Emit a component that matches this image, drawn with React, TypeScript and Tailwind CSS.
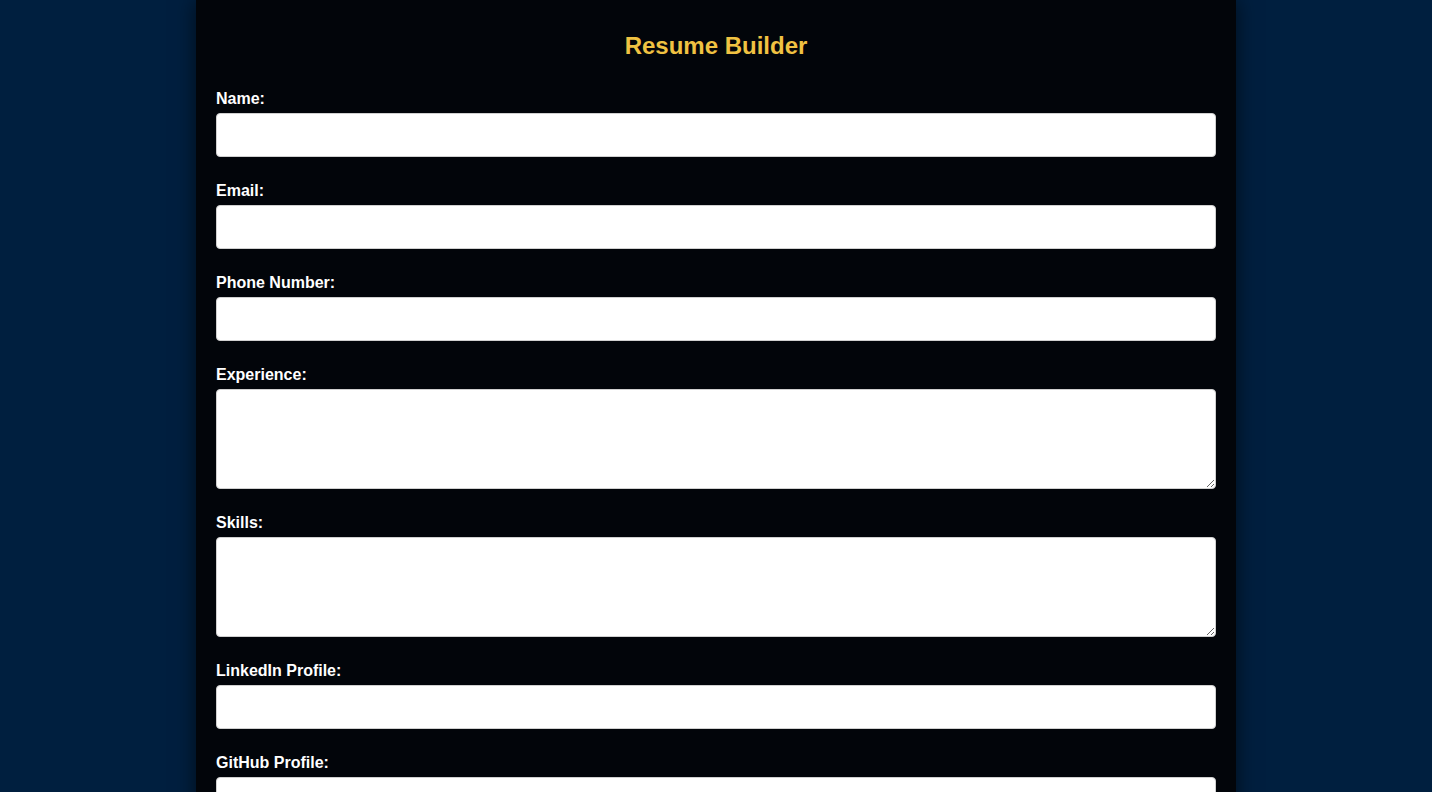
import React from "react";

const fields: { label: string; type: "input" | "textarea"; inputType?: string }[] = [
  { label: "Name:", type: "input", inputType: "text" },
  { label: "Email:", type: "input", inputType: "email" },
  { label: "Phone Number:", type: "input", inputType: "tel" },
  { label: "Experience:", type: "textarea" },
  { label: "Skills:", type: "textarea" },
  { label: "LinkedIn Profile:", type: "input", inputType: "url" },
  { label: "GitHub Profile:", type: "input", inputType: "url" },
  { label: "Education:", type: "textarea" },
];

export default function App() {
  return (
    <div
      className="min-h-screen bg-[#001f3f]"
      style={{ fontFamily: '"Liberation Sans", Arial, sans-serif' }}
    >
      <div className="mx-auto w-[1040px] bg-[#02050a] px-[20px] pt-[32px] pb-[20px] shadow-[0_0_20px_rgba(0,0,0,0.6)]">
        <h1 className="text-center text-[24px] font-bold leading-[28px] text-[#f0c242]">
          Resume Builder
        </h1>
        <form className="mt-[29px] flex flex-col">
          {fields.map((f) => (
            <div key={f.label} className="mb-[24px] flex flex-col">
              <label className="mb-[5px] block pt-[1px] text-[16px] font-bold leading-[18px] text-white">
                {f.label}
              </label>
              {f.type === "input" ? (
                <input
                  type={f.inputType}
                  className="block h-[44px] w-full rounded-[4px] border border-[#d0d0d0] bg-white px-[10px] text-[16px] text-black outline-none"
                />
              ) : (
                <textarea className="block h-[100px] w-full rounded-[4px] border border-[#d0d0d0] bg-white px-[10px] py-[10px] text-[16px] text-black outline-none" />
              )}
            </div>
          ))}
          <button
            type="button"
            className="h-[44px] w-full rounded-[4px] bg-[#f0c242] text-[16px] font-bold text-[#001f3f]"
          >
            Generate Resume
          </button>
        </form>
      </div>
    </div>
  );
}
